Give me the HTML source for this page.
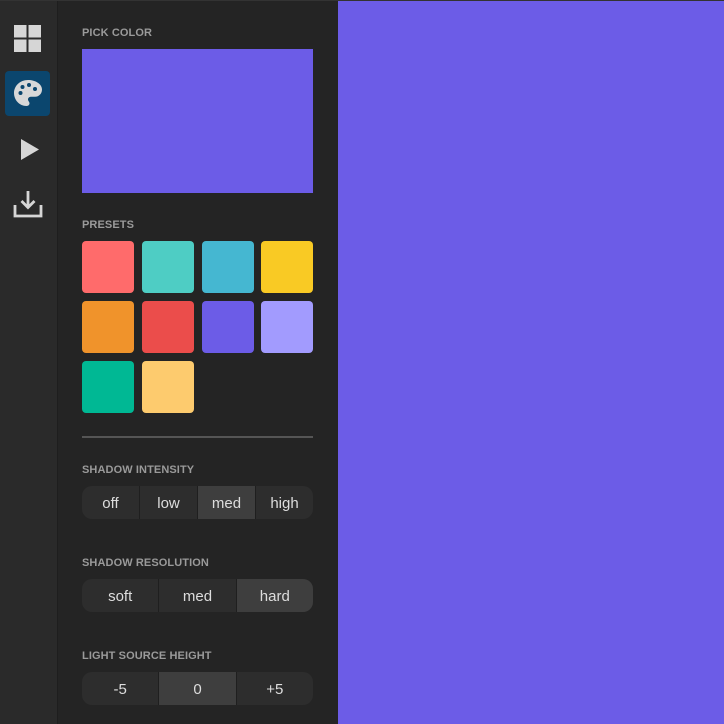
<!DOCTYPE html><html><head><style>
body{margin:0;width:724px;height:724px;background:#6c5ce7;font-family:"Liberation Sans",sans-serif;position:relative;overflow:hidden}
.top{position:absolute;left:0;top:0;width:724px;height:1px;background:#333}
.sb{position:absolute;left:0;top:1px;width:57px;height:723px;background:#2a2a2a;border-right:1px solid #1e1e1e}
.pn{position:absolute;left:58px;top:1px;width:280px;height:723px;background:#242424}
.lbl{position:absolute;left:82px;font-size:11px;font-weight:bold;color:#9a9a9a;letter-spacing:.1px}
.sw{position:absolute;width:52px;height:52px;border-radius:4px}
.seg{position:absolute;left:82px;width:231px;height:33px;border-radius:10px;background:#2d2d2d;display:flex;overflow:hidden}
.seg div{flex:1;text-align:center;line-height:35px;font-size:15px;color:#ddd;border-left:1px solid #1f1f1f}
.seg div:first-child{border-left:none}
.seg .a{background:#3e3e3e}
</style></head><body>
<div class="top"></div>
<div class="sb">
<svg style="position:absolute;left:14px;top:24px" width="28" height="28"><g fill="#d6d6d6"><rect x="0" y="0" width="12.5" height="12.5"/><rect x="14.5" y="0" width="12.5" height="12.5"/><rect x="0" y="14.5" width="12.5" height="12.5"/><rect x="14.5" y="14.5" width="12.5" height="12.5"/></g></svg>
<div style="position:absolute;left:5px;top:70px;width:45px;height:45px;background:#0b466e;border-radius:4px"></div>
<svg style="position:absolute;left:13px;top:78px" width="30" height="30" viewBox="0 0 30 30"><path d="M15 1C7 1 1 7 1 14c0 7 5.5 13 12.5 13 2 0 3-1.2 3-2.7 0-1.5-1.5-2.2-1.5-3.8 0-1.6 1.3-2.7 3.2-2.7h3.8C26 17.8 29 14.5 29 10.5 29 5 22.5 1 15 1z" fill="#d8d8d8"/><g fill="#0b466e"><circle cx="7.5" cy="14" r="2"/><circle cx="9.5" cy="8" r="2"/><circle cx="16" cy="6" r="2"/><circle cx="22" cy="10" r="2"/></g></svg>
<svg style="position:absolute;left:21px;top:138px" width="18" height="21"><path d="M0 0L18 10.5 0 21z" fill="#d6d6d6"/></svg>
<svg style="position:absolute;left:13px;top:189px" width="30" height="28" viewBox="0 0 30 28" fill="none" stroke="#d6d6d6" stroke-width="2.8"><path d="M15 1v16M8.5 11l6.5 6.5 6.5-6.5M2 15v11h26V15"/></svg>
</div>
<div class="pn"></div>
<div class="lbl" style="top:27px">PICK COLOR</div>
<div style="position:absolute;left:82px;top:49px;width:231px;height:144px;background:#6c5ce7"></div>
<div class="lbl" style="top:219px">PRESETS</div>
<div class="sw" style="left:82px;top:241px;background:#ff6b6b"></div>
<div class="sw" style="left:142px;top:241px;background:#4ecdc4"></div>
<div class="sw" style="left:202px;top:241px;background:#45b7d1"></div>
<div class="sw" style="left:261px;top:241px;background:#f9ca24"></div>
<div class="sw" style="left:82px;top:301px;background:#f0932b"></div>
<div class="sw" style="left:142px;top:301px;background:#eb4d4b"></div>
<div class="sw" style="left:202px;top:301px;background:#6c5ce7"></div>
<div class="sw" style="left:261px;top:301px;background:#a29bfe"></div>
<div class="sw" style="left:82px;top:361px;background:#00b894"></div>
<div class="sw" style="left:142px;top:361px;background:#fdcb6e"></div>
<div style="position:absolute;left:82px;top:436px;width:231px;height:2px;background:#555"></div>
<div class="lbl" style="top:464px">SHADOW INTENSITY</div>
<div class="seg" style="top:486px"><div>off</div><div>low</div><div class="a">med</div><div>high</div></div>
<div class="lbl" style="top:557px">SHADOW RESOLUTION</div>
<div class="seg" style="top:579px"><div>soft</div><div>med</div><div class="a">hard</div></div>
<div class="lbl" style="top:650px">LIGHT SOURCE HEIGHT</div>
<div class="seg" style="top:672px"><div>-5</div><div class="a">0</div><div>+5</div></div>
</body></html>
